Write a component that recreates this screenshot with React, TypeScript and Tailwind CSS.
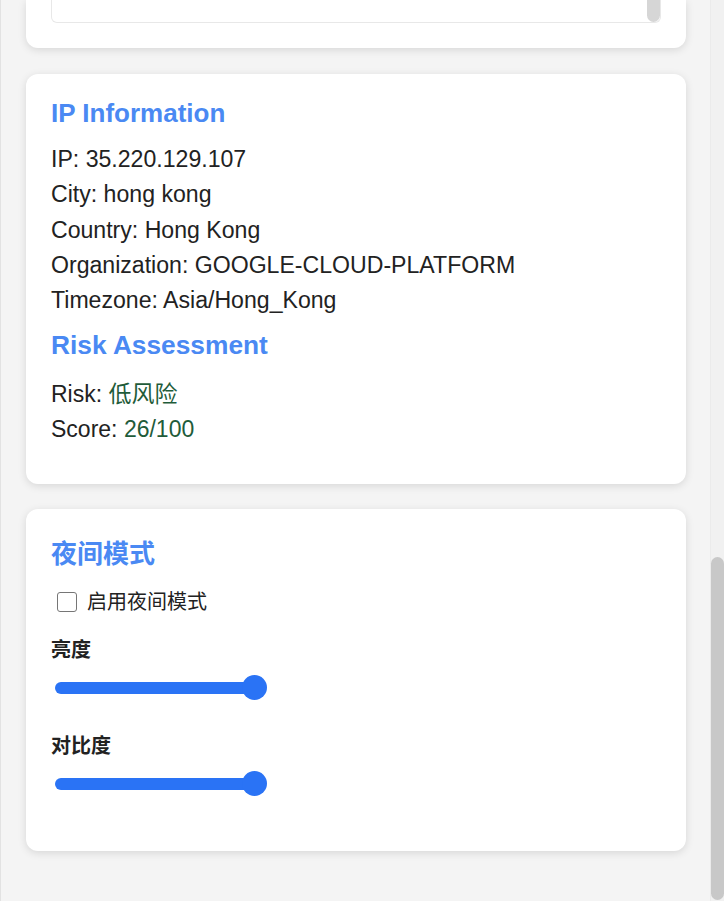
import React from "react";

const FONT = "font-['Liberation_Sans','Noto_Sans_CJK_SC',sans-serif]";

const Card = ({ className = "", children }: { className?: string; children: React.ReactNode }) => (
  <div className={`bg-white shadow-[0_2px_8px_rgba(0,0,0,0.12)] ${className}`}>{children}</div>
);

const Slider = () => (
  <div className="relative ml-[4px] flex h-[25px] w-[212px] items-center">
    <div className="h-[12px] w-[205px] rounded-full bg-[#2a73f5]" />
    <div className="absolute right-0 top-0 h-[25px] w-[25px] rounded-full bg-[#2a73f5]" />
  </div>
);

export default function App() {
  const ipRows = [
    "IP: 35.220.129.107",
    "City: hong kong",
    "Country: Hong Kong",
    "Organization: GOOGLE-CLOUD-PLATFORM",
    "Timezone: Asia/Hong_Kong",
  ];

  return (
    <div className={`flex h-[901px] overflow-hidden bg-[#f4f4f4] text-[#222] ${FONT}`}>
      <div className="flex min-w-0 flex-1 flex-col border-l border-[#e2e2e2] pl-[25px] pr-[24px]">
        {/* tail of the card above, scrolled out of view */}
        <Card className="h-[48px] rounded-b-[12px] px-[25px]">
          <div className="flex h-[23px] justify-end rounded-b-[6px] border-x border-b border-[#e8e8e8]">
            <div className="h-[22px] w-[13px] rounded-b-full bg-[#d6d6d6]" />
          </div>
        </Card>

        <Card className="mt-[26px] h-[410px] rounded-[12px] px-[25px] pt-[25px]">
          <h2 className="mb-[15px] text-[26px] font-bold leading-[28px] text-[#4a89f3]">IP Information</h2>
          {ipRows.map((row) => (
            <p key={row} className="text-[23.1px] leading-[35.3px]">
              {row}
            </p>
          ))}
          <h2 className="mb-[18px] mt-[13px] text-[26.3px] font-bold leading-[28px] text-[#4a89f3]">
            Risk Assessment
          </h2>
          <p className="text-[23px] leading-[35px]">
            Risk: <span className="text-[#1f5c3a]">低风险</span>
          </p>
          <p className="text-[23px] leading-[35px]">
            Score: <span className="text-[#1f5c3a]">26/100</span>
          </p>
        </Card>

        <Card className="mt-[25px] h-[342px] rounded-[12px] px-[25px] pt-[31px]">
          <h2 className="text-[26px] font-bold leading-[28px] text-[#4a89f3]">夜间模式</h2>
          <label className="mt-[22px] flex items-center">
            <span className="ml-[6px] h-[20px] w-[20px] rounded-[3px] border-[1.5px] border-[#767676] bg-white" />
            <span className="ml-[10px] text-[20px] leading-[24px]">启用夜间模式</span>
          </label>
          <div className="mt-[24px] text-[20px] font-bold leading-[24px]">亮度</div>
          <div className="mt-[13px]">
            <Slider />
          </div>
          <div className="mt-[34px] text-[20px] font-bold leading-[24px]">对比度</div>
          <div className="mt-[13px]">
            <Slider />
          </div>
        </Card>
      </div>

      {/* page scrollbar */}
      <div className="flex w-[14px] flex-col justify-end border-l border-[#ebebeb] bg-[#f1f1f1]">
        <div className="mb-[1px] h-[343px] rounded-full bg-[#c8c8c8]" />
      </div>
    </div>
  );
}
